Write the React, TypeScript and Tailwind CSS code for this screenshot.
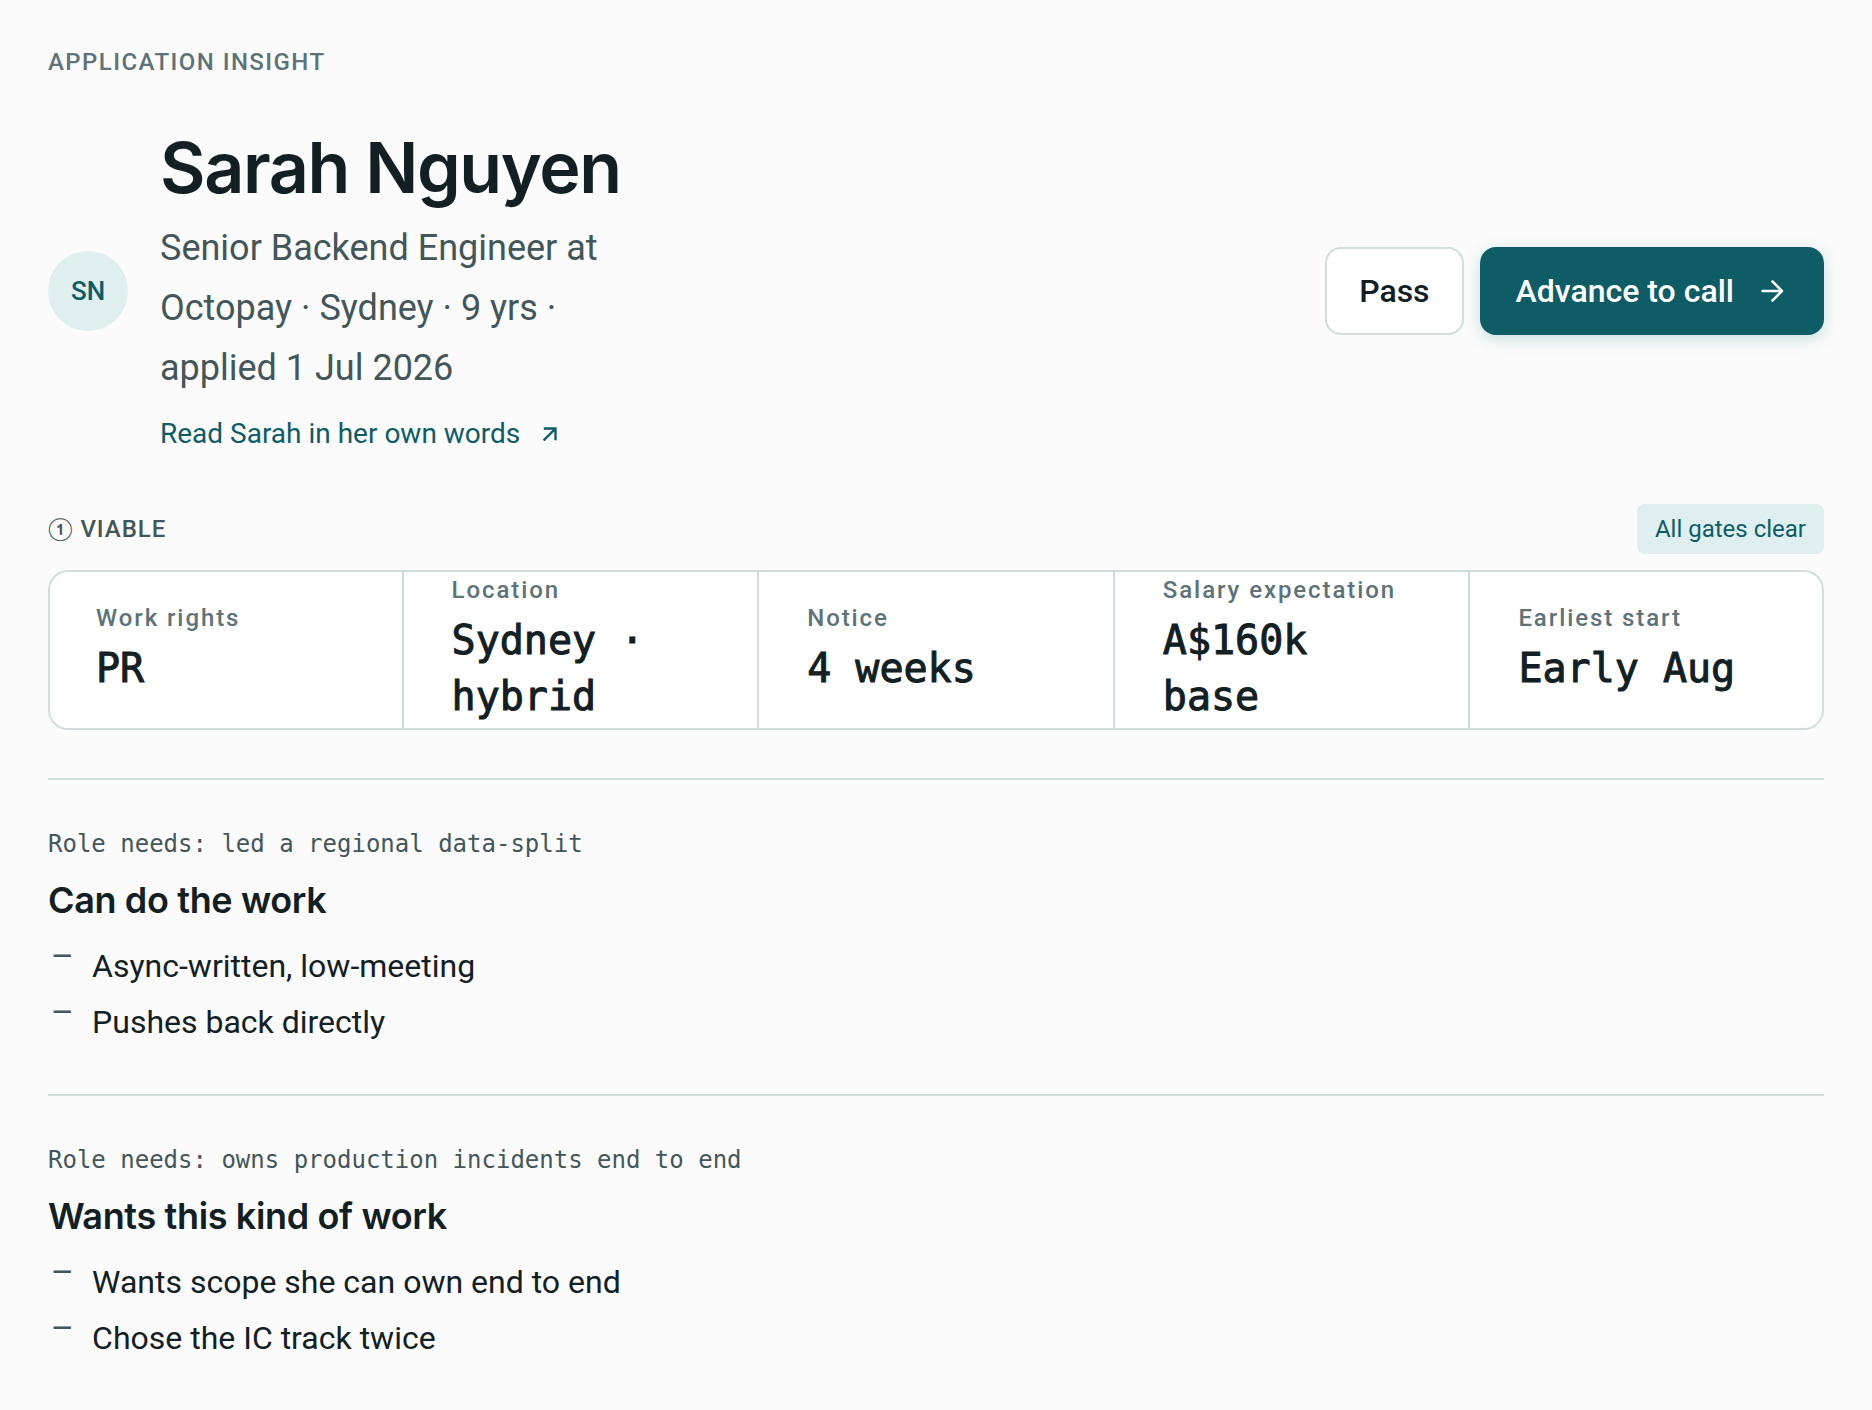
type Gate = { label: string; value: string };
type Evidence = { need: string; title: string; points: string[] };

const gates: Gate[] = [
  { label: "Work rights", value: "PR" },
  { label: "Location", value: "Sydney · hybrid" },
  { label: "Notice", value: "4 weeks" },
  { label: "Salary expectation", value: "A$160k base" },
  { label: "Earliest start", value: "Early Aug" },
];

const evidence: Evidence[] = [
  {
    need: "Role needs: led a regional data-split",
    title: "Can do the work",
    points: ["Async-written, low-meeting", "Pushes back directly"],
  },
  {
    need: "Role needs: owns production incidents end to end",
    title: "Wants this kind of work",
    points: ["Wants scope she can own end to end", "Chose the IC track twice"],
  },
];

function ArrowRight() {
  return (
    <svg className="size-7" viewBox="0 0 28 28" fill="none" stroke="currentColor" strokeWidth="2.5" strokeLinecap="round" strokeLinejoin="round" aria-hidden="true">
      <path d="M2.5 14h19.5M12.5 4.5 22 14l-9.5 9.5" />
    </svg>
  );
}

function ArrowUpRight() {
  return (
    <svg className="size-6" viewBox="0 0 24 24" fill="none" stroke="currentColor" strokeWidth="2.4" strokeLinecap="square" aria-hidden="true">
      <path d="M8.5 17.5 19 7M9 6.5h10.5V17" />
    </svg>
  );
}

function Header() {
  return (
    <header className="mt-11 flex items-center justify-between gap-8">
      <div className="flex items-center gap-8">
        <div className="flex size-20 shrink-0 items-center justify-center rounded-full bg-[#dfefef] text-[26px] font-medium text-[#0d5c66]">
          SN
        </div>
        <div className="max-w-[480px]">
          <h1 className="font-['Inter',sans-serif] text-[70px] leading-[88px] font-semibold tracking-[-0.02em] whitespace-nowrap">
            Sarah Nguyen
          </h1>
          <p className="mt-1.5 text-[36px] leading-[60px] text-[#435659]">
            Senior Backend Engineer at Octopay · Sydney · 9 yrs · applied 1 Jul 2026
          </p>
          <a href="#own-words" className="mt-3 inline-flex items-center gap-4 text-[28px] leading-[48px] text-[#0d5c66]">
            Read Sarah in her own words
            <ArrowUpRight />
          </a>
        </div>
      </div>
      <div className="flex shrink-0 gap-4 text-[32px] font-medium">
        <button type="button" className="h-[88px] rounded-2xl border-2 border-[#d1dddc] bg-white px-8">
          Pass
        </button>
        <button type="button" className="flex h-[88px] items-center gap-[26px] rounded-2xl bg-[#0d5c66] px-9 text-white shadow-[0_4px_16px_rgba(13,120,130,0.22)]">
          Advance to call
          <ArrowRight />
        </button>
      </div>
    </header>
  );
}

function Gates() {
  return (
    <section className="mt-[46px]">
      <div className="flex items-center justify-between">
        <h2 className="flex items-center gap-2 text-[24px] leading-8 font-medium tracking-[0.04em] text-[#435659]">
          <span className="font-['Lato',sans-serif] text-[22px] tracking-normal">①</span>
          VIABLE
        </h2>
        <span className="rounded-lg bg-[#dfefef] px-[18px] text-[24px] leading-[50px] text-[#0d5c66]">All gates clear</span>
      </div>
      <dl className="relative mt-4 grid min-h-40 grid-cols-5 gap-0.5 overflow-hidden rounded-[20px] bg-[#d1dddc] after:pointer-events-none after:absolute after:inset-0 after:rounded-[20px] after:border-2 after:border-[#d1dddc]">
        {gates.map((gate) => (
          <div key={gate.label} className="flex flex-col justify-center bg-white px-12">
            <dt className="mb-2 text-[24px] leading-7 font-medium tracking-[0.08em] whitespace-nowrap text-[#5d7378]">{gate.label}</dt>
            <dd className="font-['DejaVu_Sans_Mono',monospace] text-[40px] leading-14 [-webkit-text-stroke:1px_#122024]">{gate.value}</dd>
          </div>
        ))}
      </dl>
    </section>
  );
}

function EvidenceSection({ item }: { item: Evidence }) {
  return (
    <section className="border-t-2 border-[#d1dddc] pt-12 pb-11">
      <p className="font-['DejaVu_Sans_Mono',monospace] text-[24px] leading-8 text-[#435659]">{item.need}</p>
      <h2 className="mt-4 font-['Inter',sans-serif] text-[36px] leading-[48px] font-semibold tracking-[-0.01em]">{item.title}</h2>
      <ul className="mt-3.5 text-[32px] leading-14">
        {item.points.map((point) => (
          <li key={point} className="flex items-start gap-5">
            <span className="ml-1 text-[26px] leading-9 font-medium text-[#435659]">—</span>
            {point}
          </li>
        ))}
      </ul>
    </section>
  );
}

export default function App() {
  return (
    <main className="min-h-screen bg-[#fbfbfb] px-12 pt-11 font-['Roboto',sans-serif] text-[#122024]">
      <p className="text-[24px] leading-9 font-medium tracking-[0.06em] text-[#5d7378]">APPLICATION INSIGHT</p>
      <Header />
      <Gates />
      <div className="mt-12">
        {evidence.map((item) => (
          <EvidenceSection key={item.title} item={item} />
        ))}
      </div>
    </main>
  );
}
